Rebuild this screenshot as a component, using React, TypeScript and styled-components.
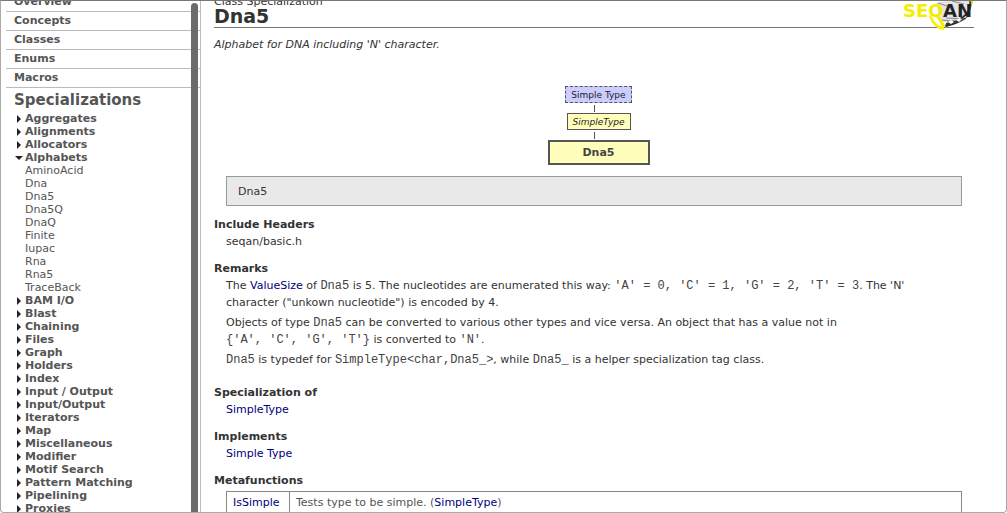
import React from "react";
import styled, { createGlobalStyle } from "styled-components";

const GlobalStyle = createGlobalStyle`
  * { box-sizing: border-box; }
  html, body { margin: 0; background: #fff; }
  body {
    font-family: "DejaVu Sans", Verdana, sans-serif;
    font-size: 11px;
    line-height: 17px;
    color: #333;
  }
  a { color: #000080; text-decoration: none; }
`;

const Frame = styled.div`
  display: flex;
  height: 100vh;
  overflow: hidden;
  border: 1px solid #aaa;
  border-top-color: #777;
  border-radius: 0 0 4px 4px;
`;

const Sidebar = styled.aside`
  position: relative;
  flex: 0 0 200px;
  overflow: hidden;
  border-right: 1px solid #bbb;
`;

const SidebarScroll = styled.nav`
  margin-top: -8px;
  padding-left: 5px;
  color: #555;
  a { color: inherit; }
`;

const ScrollThumb = styled.div`
  position: absolute;
  top: 2px;
  bottom: -8px;
  right: 2px;
  width: 7px;
  border-radius: 4px;
  background: #6b6b6b;
`;

const PageLink = styled.a`
  display: block;
  height: 19px;
  padding-left: 8px;
  line-height: 18px;
  font-weight: bold;
  border-bottom: 1px solid #bbb;
`;

const NavTitle = styled.h2`
  margin: 0;
  padding: 1px 0 0 8px;
  font-size: 15px;
  line-height: 23px;
`;

const Tree = styled.ul`
  margin: 0;
  padding: 0;
  list-style: none;
  line-height: 13px;
`;

const Group = styled.a`
  display: flex;
  align-items: center;
  padding-left: 9px;
  font-weight: bold;
  white-space: nowrap;
`;

const Arrow = styled.svg`
  width: 8px;
  height: 8px;
  margin-right: 2px;
  fill: #222;
`;

const Leaf = styled.a`
  display: block;
  padding-left: 19px;
`;

const Main = styled.main`
  flex: 1;
  min-width: 0;
  overflow: hidden;
  padding: 0 32px 0 13px;
`;

const Header = styled.header`
  display: flex;
  justify-content: space-between;
  height: 34px;
  margin-top: -7px;
  border-bottom: 1px solid #777;
`;

const Kind = styled.div`
  line-height: 16px;
`;

const Title = styled.h1`
  margin: 0;
  font-size: 19px;
  line-height: 12px;
`;

const Logo = styled.svg`
  flex: none;
  width: 72px;
  height: 32px;
  margin-top: 6px;
  overflow: visible;
`;

const Summary = styled.p`
  margin: 8px 0 33px;
  font-style: italic;
`;

const Diagram = styled.div`
  display: flex;
  flex-direction: column;
  align-items: center;
  padding-left: 9px;
`;

const Node = styled.a<{ $kind: "concept" | "base" | "self" }>`
  && { color: ${(p) => (p.$kind === "self" ? "#444" : "#222")}; }
  width: ${(p) => (p.$kind === "self" ? 102 : p.$kind === "base" ? 64 : 67)}px;
  padding-top: 1px;
  text-align: center;
  white-space: nowrap;
  background: ${(p) => (p.$kind === "concept" ? "#ccf" : "#ffb")};
  border: ${(p) => (p.$kind === "self" ? "2px solid" : p.$kind === "base" ? "1px solid" : "1px dashed")} #555;
  font-size: ${(p) => (p.$kind === "self" ? 11 : 9)}px;
  line-height: ${(p) => (p.$kind === "self" ? 20 : 14)}px;
  font-weight: ${(p) => (p.$kind === "self" ? "bold" : "normal")};
  font-style: ${(p) => (p.$kind === "base" ? "italic" : "normal")};
`;

const Connector = styled.div`
  width: 9px;
  height: 7px;
  margin: 2px 0 1px;
  border-left: 1px solid #555;
`;

const Signature = styled.div`
  margin: 11px 12px 10px;
  padding: 1px 11px 0;
  line-height: 27px;
  background: #e9e9e9;
  border: 1px solid #999;
`;

const Section = styled.section`
  margin-bottom: 10px;
`;

const Heading = styled.h2`
  margin: 0;
  font-size: 11px;
`;

const Body = styled.div<{ $prose?: boolean }>`
  padding: 0 ${(p) => (p.$prose ? 32 : 12)}px 0 12px;
  margin-bottom: ${(p) => (p.$prose ? 16 : 0)}px;
  p { margin: 0 0 3px; }
  p:last-child { margin: 0; }
`;

const Code = styled.code`
  font-family: "Liberation Mono", "Courier New", monospace;
  font-size: 12px;
  line-height: 1;
  color: #444;
  white-space: nowrap;
`;

const Table = styled.table`
  width: calc(100% - 24px);
  margin: 2px 12px 0;
  border-collapse: collapse;
  color: #555;
  th, td {
    padding: 2px 6px;
    border: 1px solid #888;
    text-align: left;
    font-weight: normal;
  }
  th { width: 63px; }
`;

const pages = ["Overview", "Concepts", "Classes", "Enums", "Macros"];

const groups: { name: string; items?: string[] }[] = [
  { name: "Aggregates" },
  { name: "Alignments" },
  { name: "Allocators" },
  {
    name: "Alphabets",
    items: ["AminoAcid", "Dna", "Dna5", "Dna5Q", "DnaQ", "Finite", "Iupac", "Rna", "Rna5", "TraceBack"],
  },
  ...[
    "BAM I/O", "Blast", "Chaining", "Files", "Graph", "Holders", "Index", "Input / Output",
    "Input/Output", "Iterators", "Map", "Miscellaneous", "Modifier", "Motif Search",
    "Pattern Matching", "Pipelining", "Proxies",
  ].map((name) => ({ name })),
];

function SeqAnLogo() {
  return (
    <Logo viewBox="0 0 72 32" role="img" aria-label="SeqAn">
      <path d="M34 3 L44 0 L69 0 L66 14 L52 24 L38 21Z" fill="#e4e4e4" />
      <path d="M36 3 l9 3 M40 20 l10 1 M50 1 l12 3 M45 22 l8 -2 M44 18 l20 1" stroke="#888" fill="none" />
      <path d="M68 1 Q72 16 43 26" stroke="#333" strokeWidth="2" fill="none" />
      <path d="M44 23 L58 20 L67 16 Q58 24 44 27Z" fill="#333" />
      <path d="M46 22 l3 -2 3 2 -3 2z M54 20 l3 -2 3 1 -3 3z" fill="#fff" />
      <path d="M29 15 Q33 26 42 27 L42 30 Q31 29 27 16Z" fill="#f8f000" />
      <path d="M35 17 L40 27 L44 27 L38 17Z" fill="#f8f000" />
      <path d="M68 1 L71 -1 L71 4Z" fill="#e8df00" />
      <text y="17" fontFamily="DejaVu Sans, sans-serif" fontSize="18" fontWeight="bold">
        <tspan x="1" fill="#f5ed00">SEQ</tspan>
        <tspan x="41" fill="#222">AN</tspan>
      </text>
    </Logo>
  );
}

export default function App() {
  return (
    <>
      <GlobalStyle />
      <Frame>
        <Sidebar>
          <SidebarScroll>
            {pages.map((p) => (
              <PageLink href="#" key={p}>{p}</PageLink>
            ))}
            <NavTitle>Specializations</NavTitle>
            <Tree>
              {groups.map((g) => (
                <li key={g.name}>
                  <Group href="#">
                    <Arrow viewBox="0 0 8 8" aria-hidden="true">
                      <path d={g.items ? "M0 2h8L4 6z" : "M2 0v8L6 4z"} />
                    </Arrow>
                    {g.name}
                  </Group>
                  {g.items?.map((i) => <Leaf href="#" key={i}>{i}</Leaf>)}
                </li>
              ))}
            </Tree>
          </SidebarScroll>
          <ScrollThumb />
        </Sidebar>
        <Main>
          <Header>
            <div>
              <Kind>Class Specialization</Kind>
              <Title>Dna5</Title>
            </div>
            <SeqAnLogo />
          </Header>
          <Summary>Alphabet for DNA including 'N' character.</Summary>
          <Diagram>
            <Node href="#" $kind="concept">Simple Type</Node>
            <Connector />
            <Node href="#" $kind="base">SimpleType</Node>
            <Connector />
            <Node href="#" $kind="self">Dna5</Node>
          </Diagram>
          <Signature>Dna5</Signature>
          <Section>
            <Heading>Include Headers</Heading>
            <Body>seqan/basic.h</Body>
          </Section>
          <Section>
            <Heading>Remarks</Heading>
            <Body $prose>
              <p>
                The <a href="#">ValueSize</a> of <Code>Dna5</Code> is 5. The nucleotides are enumerated this
                way: <Code>'A' = 0, 'C' = 1, 'G' = 2, 'T' = 3</Code>. The 'N' character ("unkown
                nucleotide") is encoded by 4.
              </p>
              <p>
                Objects of type <Code>Dna5</Code> can be converted to various other types and vice versa. An
                object that has a value not in <Code>{"{'A', 'C', 'G', 'T'}"}</Code> is converted
                to <Code>'N'</Code>.
              </p>
              <p>
                <Code>Dna5</Code> is typedef for <Code>{"SimpleType<char,Dna5_>"}</Code>, while <Code>Dna5_</Code> is
                a helper specialization tag class.
              </p>
            </Body>
          </Section>
          <Section>
            <Heading>Specialization of</Heading>
            <Body><a href="#">SimpleType</a></Body>
          </Section>
          <Section>
            <Heading>Implements</Heading>
            <Body><a href="#">Simple Type</a></Body>
          </Section>
          <Section>
            <Heading>Metafunctions</Heading>
            <Table>
              <tbody>
                <tr>
                  <th scope="row"><a href="#">IsSimple</a></th>
                  <td>Tests type to be simple. (<a href="#">SimpleType</a>)</td>
                </tr>
              </tbody>
            </Table>
          </Section>
        </Main>
      </Frame>
    </>
  );
}
